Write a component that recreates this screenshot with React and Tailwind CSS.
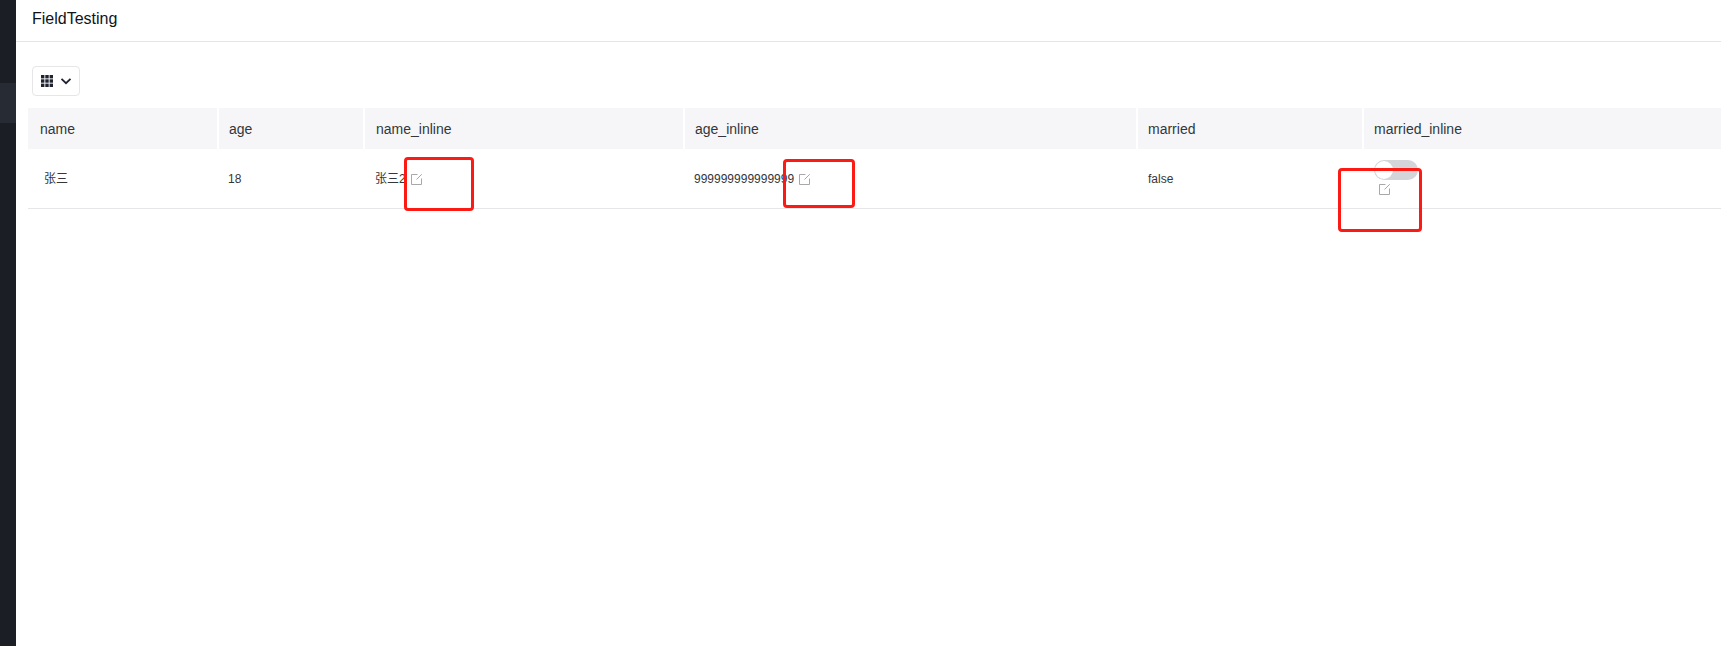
const font = "font-['Liberation_Sans','Noto_Sans_CJK_SC',sans-serif]"

function EditIcon() {
  return (
    <svg aria-hidden="true" className="h-3 w-3 shrink-0 text-[#a8a8a8]" viewBox="0 0 12 12" fill="none">
      <path d="M6.5 1.5H.5v10h10V5.5" stroke="currentColor" strokeWidth="1" />
      <path d="M5.5 6.5 10.8 1.2" stroke="currentColor" strokeWidth="1" />
    </svg>
  )
}

function GridIcon() {
  return (
    <svg aria-hidden="true" className="h-3 w-3 text-[#1f2330]" viewBox="0 0 12 12" fill="currentColor">
      <rect x="0" y="0" width="3.4" height="3.4" />
      <rect x="4.3" y="0" width="3.4" height="3.4" />
      <rect x="8.6" y="0" width="3.4" height="3.4" />
      <rect x="0" y="4.3" width="3.4" height="3.4" />
      <rect x="4.3" y="4.3" width="3.4" height="3.4" />
      <rect x="8.6" y="4.3" width="3.4" height="3.4" />
      <rect x="0" y="8.6" width="3.4" height="3.4" />
      <rect x="4.3" y="8.6" width="3.4" height="3.4" />
      <rect x="8.6" y="8.6" width="3.4" height="3.4" />
    </svg>
  )
}

function Chevron() {
  return (
    <svg aria-hidden="true" className="h-3 w-3 text-[#1f2330]" viewBox="0 0 12 12" fill="none">
      <path d="M1.5 3.8 6 8.2l4.5-4.4" stroke="currentColor" strokeWidth="1.8" />
    </svg>
  )
}

function Mark({ className }) {
  return <div className={"absolute rounded-[4px] border-[3px] border-[#fb1a14] " + className} />
}

export default function App() {
  return (
    <div className={"flex h-[646px] w-full overflow-hidden bg-white " + font}>
      <aside className="h-full w-4 shrink-0 bg-[#1c1e26] pt-[83px]">
        <div className="h-10 bg-[#272b33]" />
      </aside>

      <main className="relative min-w-0 flex-1">
        <header className="flex h-[42px] items-center border-b border-[#e4e5e7] pb-1 pl-4 text-base text-[#0f1419]">
          FieldTesting
        </header>

        <div className="pl-3 pt-6">
          <button className="ml-1 flex h-[30px] w-12 items-center justify-center gap-[7px] rounded-[4px] border border-[#e6e6e8] bg-white pl-px">
            <GridIcon />
            <Chevron />
          </button>

          <table className="mt-3 w-[1693px] table-fixed border-collapse text-left">
            <thead>
              <tr className="h-[41px] bg-[#f6f6f8] text-sm font-normal text-[#33363d]">
                <th className="w-[190px] border-r-2 border-white pl-3 font-normal">name</th>
                <th className="w-[146px] border-r-2 border-white pl-[10px] font-normal">age</th>
                <th className="w-[320px] border-r-2 border-white pl-[11px] font-normal">name_inline</th>
                <th className="w-[453px] border-r-2 border-white pl-[10px] font-normal">age_inline</th>
                <th className="w-[226px] border-r-2 border-white pl-[10px] font-normal">married</th>
                <th className="pl-[10px] font-normal">married_inline</th>
              </tr>
            </thead>
            <tbody>
              <tr className="h-[59px] border-b border-[#e6e6e8] text-xs text-[#33363d]">
                <td className="pl-4 pt-[2px]">张三</td>
                <td className="pl-[10px] pt-[2px]">18</td>
                <td className="pl-[11px] pt-[2px]">
                  <div className="flex items-center gap-[5px]">
                    <span>张三2</span>
                    <EditIcon />
                  </div>
                </td>
                <td className="pl-[10px] pt-[2px]">
                  <div className="flex items-center gap-[5px]">
                    <span>999999999999999</span>
                    <EditIcon />
                  </div>
                </td>
                <td className="pl-[11px] pt-[2px]">false</td>
                <td className="pl-[11px]">
                  <div className="flex flex-col items-start gap-[3px] pb-[1px]">
                    <span className="flex h-5 w-11 items-center rounded-full bg-[#d4d5d8] p-px">
                      <span className="h-[18px] w-[18px] rounded-full bg-white" />
                    </span>
                    <span className="pl-[5px]">
                      <EditIcon />
                    </span>
                  </div>
                </td>
              </tr>
            </tbody>
          </table>
        </div>

        <Mark className="left-[388px] top-[157px] h-[54px] w-[70px]" />
        <Mark className="left-[767px] top-[159px] h-[49px] w-[72px]" />
        <Mark className="left-[1322px] top-[168px] h-[64px] w-[84px]" />
      </main>
    </div>
  )
}
